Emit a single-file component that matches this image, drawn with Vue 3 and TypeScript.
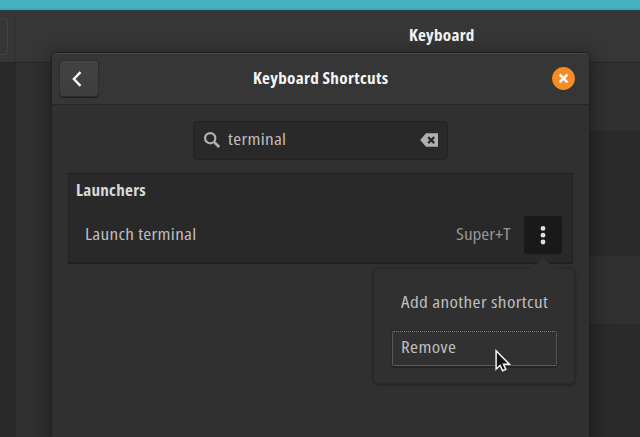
<script setup lang="ts">
import { ref } from 'vue'

interface Shortcut {
  name: string
  keys: string
}

const query = ref('terminal')
const shortcuts: Shortcut[] = [{ name: 'Launch terminal', keys: 'Super+T' }]
</script>

<template>
  <div class="desktop">
    <div class="wallpaper"></div>
    <div class="parent">
      <header class="parent-header">
        <div class="side-header"><div class="side-button"></div></div>
        <h1 class="parent-title"><span class="label">Keyboard</span></h1>
      </header>
      <div class="parent-body">
        <aside class="sidebar"></aside>
        <main class="content">
          <div class="band"></div>
          <div class="band dark"></div>
          <div class="band"></div>
          <div class="band dark"></div>
        </main>
      </div>
    </div>

    <section class="dialog">
      <header class="dialog-header">
        <button class="back" aria-label="Back">
          <svg width="14" height="18" viewBox="0 0 14 18"><path d="M10.5 2.2 3.9 9l6.6 6.8" fill="none" stroke="#fafafa" stroke-width="2.4" /></svg>
        </button>
        <h2><span class="label">Keyboard Shortcuts</span></h2>
        <button class="close" aria-label="Close">
          <svg width="23" height="23" viewBox="0 0 23 23"><circle cx="11.5" cy="11.5" r="11.4" fill="#f68c26" /><path d="m7.6 7.5 7.8 7.8m0-7.8-7.8 7.8" stroke="#fff6e9" stroke-width="2.6" /></svg>
        </button>
      </header>

      <div class="dialog-body">
        <div class="search">
          <svg width="18" height="18" viewBox="0 0 18 18"><circle cx="7.2" cy="7.2" r="5.1" fill="none" stroke="#b2b2b2" stroke-width="2.2" /><path d="m11 11 5.2 5" stroke="#b2b2b2" stroke-width="2.7" /></svg>
          <span class="query"><span class="label">{{ query }}</span></span>
          <svg width="18" height="14" viewBox="0 0 18 14"><path d="M6 .3h12v13.4H6L.2 7z" fill="#b0b0b0" /><path d="m8.2 4.1 6 6m0-6-6 6" stroke="#292929" stroke-width="2.2" /></svg>
        </div>

        <div class="list">
          <h3><span class="label">Launchers</span></h3>
          <div v-for="s in shortcuts" :key="s.name" class="row">
            <span class="name"><span class="label">{{ s.name }}</span></span>
            <span class="keys"><span class="label">{{ s.keys }}</span></span>
            <button class="more" aria-label="More">
              <svg width="6" height="20" viewBox="0 0 6 20" fill="#dedede"><circle cx="3" cy="3.4" r="2.4" /><circle cx="3" cy="10.2" r="2.4" /><circle cx="3" cy="17" r="2.4" /></svg>
            </button>
          </div>
        </div>
      </div>
    </section>

    <div class="popover">
      <svg class="tip" width="24" height="12" viewBox="0 0 24 12"><path d="M0 12V11l3-1.5L11 1q1-.8 2 0l8 8.5 3 1.5v1z" fill="#303030" /></svg>
      <div class="item"><span class="label">Add another shortcut</span></div>
      <div class="item focused"><span class="label">Remove</span></div>
    </div>

    <svg class="cursor" width="16" height="24" viewBox="0 0 16 24"><path d="M1.1 1.8v18.3l4-3.6 2.5 5.3 3.2-1.4-2.3-5.2h5.8z" fill="#151515" stroke="#f4f4f4" stroke-width="1.5" /></svg>
  </div>
</template>

<style>
body { margin: 0; overflow: hidden; background: #2b2b2b; }
</style>

<style scoped>
.desktop {
  position: relative;
  display: flex;
  flex-direction: column;
  width: 640px;
  height: 437px;
  overflow: hidden;
  font: 16px/20px "Open Sans", "Noto Sans", sans-serif;
  font-stretch: 75%;
  letter-spacing: 0.25px;
  white-space: nowrap;
  color: #bebebe;
}
* { box-sizing: border-box; }
h1, h2, h3 { margin: 0; font-size: 16px; line-height: 20px; font-weight: 700; letter-spacing: 0.25px; }
.label { display: block; width: max-content; transform: scaleX(1.2); transform-origin: 0 50%; }
h1 .label, h2 .label, h3 .label { transform: scaleX(1.07); }
button { padding: 0; border: 0; display: flex; align-items: center; justify-content: center; }
svg { display: block; flex: none; }

.wallpaper { height: 10px; background: linear-gradient(#47b2bf 0 80%, #3d9da9); }
.parent { flex: 1; display: flex; flex-direction: column; border-top: 1px solid #2b4144; }
.parent-header {
  height: 52px;
  display: flex;
  background: #363636;
  border-bottom: 1px solid #262626;
}
.side-header { width: 16px; display: flex; align-items: center; border-right: 1px solid #313131; }
.side-button { width: 8px; height: 37px; border: 1px solid #424242; border-left: 0; border-radius: 0 4px 4px 0; }
.parent-title { padding: 14px 0 0 393px; color: #f4f4f4; }
.parent-body { flex: 1; display: flex; }
.sidebar { width: 16px; background: #292929; }
.content { flex: 1; display: grid; grid-template-rows: 68px 125px 68px 1fr; background: #303030; }
.band { margin-left: 480px; }
.band.dark { background: #2a2a2a; }

.dialog {
  position: absolute;
  left: 52px;
  top: 53px;
  width: 537px;
  height: 400px;
  background: #303030;
  border-radius: 5px 5px 0 0;
  box-shadow: 0 0 0 1px #202020, 0 3px 18px 2px rgba(0, 0, 0, 0.42);
}
.dialog-header {
  height: 52px;
  padding: 0 14px 0 7px;
  display: grid;
  grid-template-columns: 40px 1fr 23px;
  align-items: center;
  background: #363636;
  border-radius: 5px 5px 0 0;
  border-bottom: 1px solid #262626;
  box-shadow: inset 0 1px #474747;
}
.back {
  width: 40px;
  height: 37px;
  padding-right: 4px;
  background: linear-gradient(#434343, #3d3d3d);
  border: 1px solid #2c2c2c;
  border-radius: 4px;
  box-shadow: inset 0 1px #494949, 0 1px #212121;
}
.dialog-header h2 { padding: 0 0 2px 154px; color: #f4f4f4; letter-spacing: 0.3px; }
.close { background: none; }
.dialog-body { padding: 16px; }
.search {
  width: 255px;
  height: 39px;
  margin: 0 auto;
  padding: 0 9px 1px;
  display: flex;
  align-items: center;
  background: #292929;
  border: 1px solid #222;
  border-radius: 4px;
}
.query { flex: 1; padding: 0 0 2px 7px; }
.list {
  height: 91px;
  margin-top: 13px;
  background: #292929;
  border: 1px solid #202020;
  border-bottom-width: 2px;
}
h3 { padding: 6px 0 0 7px; color: #d8d8d8; }
.row { display: flex; align-items: center; height: 38px; margin-top: 16px; padding: 0 10px 0 16px; }
.name { flex: 1; padding-bottom: 2px; }
.keys { width: 68px; padding-bottom: 2px; color: #969696; letter-spacing: 0; }
.more { width: 38px; height: 38px; border-radius: 3px; background: #191919; }

.popover {
  position: absolute;
  left: 373px;
  top: 268px;
  width: 202px;
  height: 116px;
  padding: 16px 17px 0 18px;
  background: #303030;
  border: 1px solid #292929;
  border-radius: 5px;
  box-shadow: 0 1px 3px rgba(0, 0, 0, 0.35);
}
.tip { position: absolute; left: 157px; top: -12px; }
.item { height: 35px; padding: 7px 9px; letter-spacing: 0.32px; }
.focused {
  margin-top: 11px;
  background: #313131;
  border: 1px dotted #808080;
  border-radius: 2px;
  padding: 5px 8px;
  box-shadow: 0 0 0 1px #292929, 0 2px #232323;
}
.cursor { position: absolute; left: 495px; top: 349px; }
</style>
